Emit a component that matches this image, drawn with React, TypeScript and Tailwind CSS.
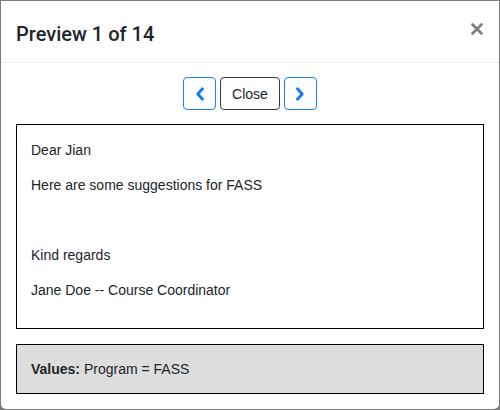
import { useState } from 'react'

const lines = ['Dear Jian', 'Here are some suggestions for FASS', '\u00a0', 'Kind regards', 'Jane Doe -- Course Coordinator']

function Chevron({ dir }: { dir: 'left' | 'right' }) {
  return (
    <svg width="10" height="14" viewBox="0 0 10 14" fill="none">
      <path
        d={dir === 'left' ? 'M7.5 1.8 L2.8 7 L7.5 12.2' : 'M2.5 1.8 L7.2 7 L2.5 12.2'}
        stroke="#0a7cff"
        strokeWidth="2.8"
        strokeLinecap="round"
        strokeLinejoin="round"
      />
    </svg>
  )
}

export default function App() {
  const [page, setPage] = useState(1)
  const total = 14

  return (
    <div className="h-[410px] w-[500px] bg-[#7c7c7c] p-px font-['Liberation_Sans',Arial,sans-serif] text-[#212529]">
      <div className="h-[408px] bg-white rounded-b-[5px] flex flex-col">
        {/* header */}
        <div className="flex items-start justify-between pl-[15px] pr-[16px] pt-[18px] pb-[13px] border-b border-[#e9ecef]">
          <h5 className="font-['Roboto',sans-serif] text-[20px] leading-[30px] font-medium">Preview {page} of {total}</h5>
          <button className="mt-[4px] p-0" aria-label="Close">
            <svg width="12" height="12" viewBox="0 0 12 12">
              <path d="M1.5 1.5 L10.5 10.5 M10.5 1.5 L1.5 10.5" stroke="#7f7f7f" strokeWidth="2.6" strokeLinecap="round" />
            </svg>
          </button>
        </div>

        {/* body */}
        <div className="px-[15px] pt-[14px]">
          <div className="flex justify-center gap-[4px] mb-[14px] text-[14px] leading-[21px]">
            <button
              onClick={() => setPage(p => Math.max(1, p - 1))}
              className="w-[33px] h-[33px] flex items-center justify-center border border-[#1a82ff] rounded-[4px]"
            >
              <Chevron dir="left" />
            </button>
            <button className="h-[33px] px-[11px] pt-px border border-[#343a40] rounded-[4px] text-[#212529]">
              Close
            </button>
            <button
              onClick={() => setPage(p => Math.min(total, p + 1))}
              className="w-[33px] h-[33px] flex items-center justify-center border border-[#1a82ff] rounded-[4px]"
            >
              <Chevron dir="right" />
            </button>
          </div>

          <div className="border border-black px-[14px] pt-[15px] pb-[13px] text-[14px] leading-[21px]">
            {lines.map((l, i) => (
              <p key={i} className="mb-[14px]">{l}</p>
            ))}
          </div>

          <div className="mt-[15px] border border-black bg-[#dddddd] px-[14px] pt-[14px] pb-[13px] text-[14px] leading-[21px]">
            <b>Values:</b> Program = FASS
          </div>
        </div>
      </div>
    </div>
  )
}
